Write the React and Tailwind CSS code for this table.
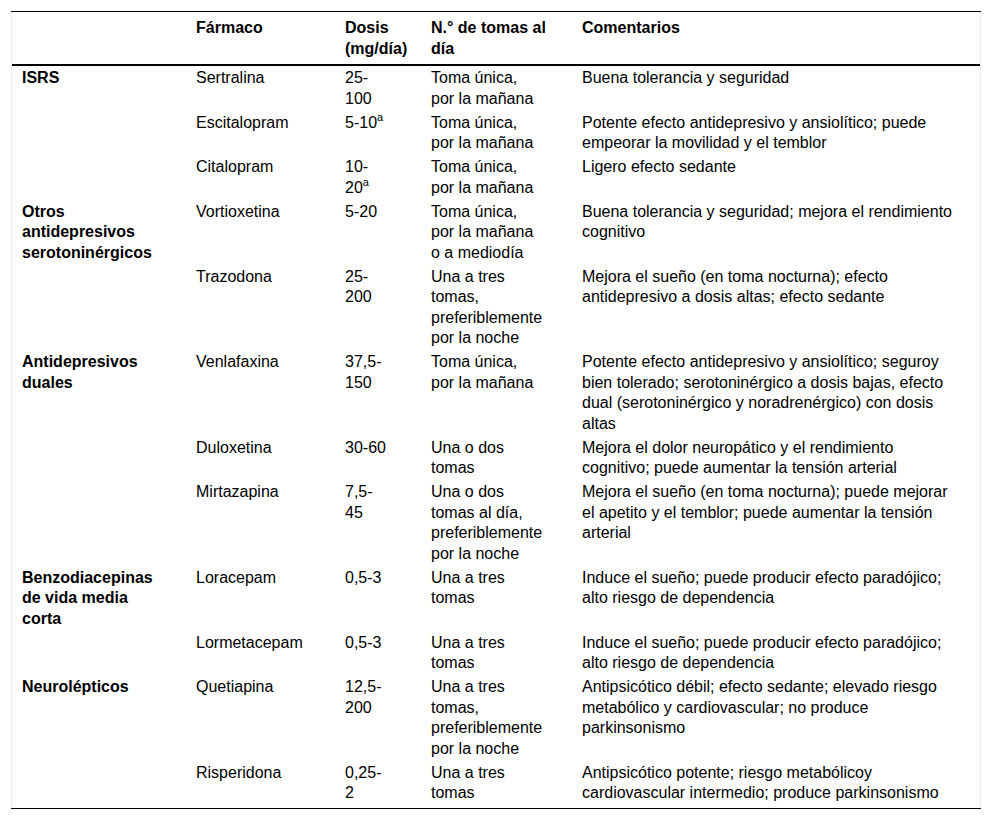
const cols = "grid grid-cols-[174px_149px_86px_151px_1fr]"

const A = () => <sup className="text-[11px] -top-[6.5px]">a</sup>

const rows = [
    {
        group: ["ISRS"],
        drug: "Sertralina",
        dose: ["25-", "100"],
        takes: ["Toma única,", "por la mañana"],
        notes: ["Buena tolerancia y seguridad"],
    },
    {
        drug: "Escitalopram",
        dose: [<>5-10<A /></>],
        takes: ["Toma única,", "por la mañana"],
        notes: [
            "Potente efecto antidepresivo y ansiolítico; puede",
            "empeorar la movilidad y el temblor",
        ],
    },
    {
        drug: "Citalopram",
        dose: ["10-", <>20<A /></>],
        takes: ["Toma única,", "por la mañana"],
        notes: ["Ligero efecto sedante"],
    },
    {
        group: ["Otros", "antidepresivos", "serotoninérgicos"],
        drug: "Vortioxetina",
        dose: ["5-20"],
        takes: ["Toma única,", "por la mañana", "o a mediodía"],
        notes: [
            "Buena tolerancia y seguridad; mejora el rendimiento",
            "cognitivo",
        ],
    },
    {
        drug: "Trazodona",
        dose: ["25-", "200"],
        takes: ["Una a tres", "tomas,", "preferiblemente", "por la noche"],
        notes: [
            "Mejora el sueño (en toma nocturna); efecto",
            "antidepresivo a dosis altas; efecto sedante",
        ],
    },
    {
        group: ["Antidepresivos", "duales"],
        drug: "Venlafaxina",
        dose: ["37,5-", "150"],
        takes: ["Toma única,", "por la mañana"],
        notes: [
            "Potente efecto antidepresivo y ansiolítico; seguroy",
            "bien tolerado; serotoninérgico a dosis bajas, efecto",
            "dual (serotoninérgico y noradrenérgico) con dosis",
            "altas",
        ],
    },
    {
        drug: "Duloxetina",
        dose: ["30-60"],
        takes: ["Una o dos", "tomas"],
        notes: [
            "Mejora el dolor neuropático y el rendimiento",
            "cognitivo; puede aumentar la tensión arterial",
        ],
    },
    {
        drug: "Mirtazapina",
        dose: ["7,5-", "45"],
        takes: ["Una o dos", "tomas al día,", "preferiblemente", "por la noche"],
        notes: [
            "Mejora el sueño (en toma nocturna); puede mejorar",
            "el apetito y el temblor; puede aumentar la tensión",
            "arterial",
        ],
    },
    {
        group: ["Benzodiacepinas", "de vida media", "corta"],
        drug: "Loracepam",
        dose: ["0,5-3"],
        takes: ["Una a tres", "tomas"],
        notes: [
            "Induce el sueño; puede producir efecto paradójico;",
            "alto riesgo de dependencia",
        ],
    },
    {
        drug: "Lormetacepam",
        dose: ["0,5-3"],
        takes: ["Una a tres", "tomas"],
        notes: [
            "Induce el sueño; puede producir efecto paradójico;",
            "alto riesgo de dependencia",
        ],
    },
    {
        group: ["Neurolépticos"],
        drug: "Quetiapina",
        dose: ["12,5-", "200"],
        takes: ["Una a tres", "tomas,", "preferiblemente", "por la noche"],
        notes: [
            "Antipsicótico débil; efecto sedante; elevado riesgo",
            "metabólico y cardiovascular; no produce",
            "parkinsonismo",
        ],
    },
    {
        drug: "Risperidona",
        dose: ["0,25-", "2"],
        takes: ["Una a tres", "tomas"],
        notes: [
            "Antipsicótico potente; riesgo metabólicoy",
            "cardiovascular intermedio; produce parkinsonismo",
        ],
    },
]

function Lines({ items }) {
    return (
        <>
            {items.map((line, i) => (
                <div key={i} className="whitespace-nowrap">
                    {line}
                </div>
            ))}
        </>
    )
}

export default function App() {
    return (
        <div className="min-h-screen bg-white pt-[11px] px-[11px] font-['Liberation_Sans',Arial,sans-serif] text-[16px] leading-[20.5px] text-black">
            <div className="border-t border-b border-black">
                <div className="border-l border-r border-[#ececec] pb-[3px]">
                    {/* header */}
                    <div className={`${cols} border-b-2 border-black font-bold`}>
                        <div className="pl-[10px] pt-[6px] pb-[5px]"></div>
                        <div className="pl-[10px] pt-[6px] pb-[5px]">Fármaco</div>
                        <div className="pl-[10px] pt-[6px] pb-[5px]">
                            <Lines items={["Dosis", "(mg/día)"]} />
                        </div>
                        <div className="pl-[10px] pt-[6px] pb-[5px]">
                            <Lines items={["N.° de tomas al", "día"]} />
                        </div>
                        <div className="pl-[10px] pt-[6px] pb-[5px]">Comentarios</div>
                    </div>

                    {rows.map((r, i) => (
                        <div key={i} className={cols}>
                            <div className="pl-[10px] pt-[2px] pb-[1.5px] font-bold">
                                {r.group && <Lines items={r.group} />}
                            </div>
                            <div className="pl-[10px] pt-[2px] pb-[1.5px]">{r.drug}</div>
                            <div className="pl-[10px] pt-[2px] pb-[1.5px]">
                                <Lines items={r.dose} />
                            </div>
                            <div className="pl-[10px] pt-[2px] pb-[1.5px]">
                                <Lines items={r.takes} />
                            </div>
                            <div className="pl-[10px] pt-[2px] pb-[1.5px]">
                                <Lines items={r.notes} />
                            </div>
                        </div>
                    ))}
                </div>
            </div>
        </div>
    )
}
